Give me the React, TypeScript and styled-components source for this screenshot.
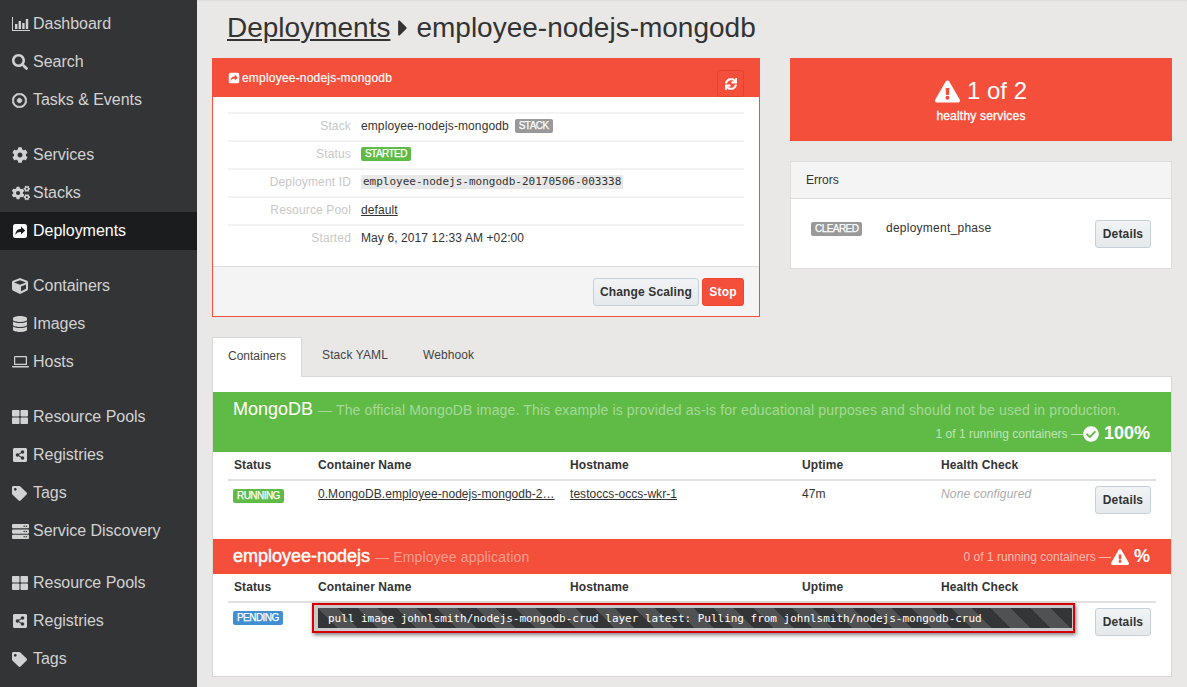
import React from "react";
import styled, { createGlobalStyle } from "styled-components";
import {
  FaCaretRight,
  FaCheckCircle,
  FaCog,
  FaCogs,
  FaCube,
  FaDatabase,
  FaExclamationTriangle,
  FaRegDotCircle,
  FaSearch,
  FaServer,
  FaShareAltSquare,
  FaSync,
  FaTag,
  FaThLarge,
} from "react-icons/fa";

const RED = "#f44f3a";
const GREEN = "#60bb46";
const SIDEBAR_WIDTH = 197;

const GlobalStyle = createGlobalStyle`
  html, body {
    margin: 0;
    padding: 0;
    height: 100%;
    overflow: hidden;
  }
  body {
    font-family: "Liberation Sans", Arial, sans-serif;
    font-size: 12px;
    color: #333;
  }
  * {
    box-sizing: border-box;
  }
`;

const Page = styled.div`
  display: flex;
  height: 687px;
  overflow: hidden;
  background: #e9e8e6;
`;

const Sidebar = styled.nav`
  width: ${SIDEBAR_WIDTH}px;
  flex: none;
  padding-top: 5px;
  background: #333436;
`;

const NavItem = styled.div<{ $active?: boolean; $gap?: number }>`
  display: flex;
  align-items: center;
  height: 38px;
  margin-top: ${(p) => p.$gap ?? 0}px;
  padding-left: 12px;
  font-size: 16px;
  letter-spacing: -0.03px;
  color: ${(p) => (p.$active ? "#fff" : "#d2d2d2")};
  background: ${(p) => (p.$active ? "#1b1c1e" : "transparent")};
`;

const NavIcon = styled.span`
  display: flex;
  align-items: center;
  width: 21px;
  flex: none;
`;

const Main = styled.main`
  flex: 1;
  min-width: 0;
  padding: 0 15px;
  box-shadow: inset 0 2px 2px -1px rgba(0, 0, 0, 0.06);
`;

const Title = styled.h1`
  display: flex;
  align-items: center;
  height: 58px;
  margin: 0;
  padding: 0 0 3px 15px;
  font-size: 28px;
  font-weight: 400;
  color: #333;
  a {
    color: inherit;
    text-decoration: underline;
  }
`;

const TopGrid = styled.div`
  display: grid;
  grid-template-columns: 548px 382px;
  column-gap: 30px;
`;

const DeploymentPanel = styled.section`
  height: 259px;
  display: flex;
  flex-direction: column;
  background: #fff;
  border: 1px solid ${RED};
`;

const PanelHead = styled.div`
  display: flex;
  align-items: center;
  justify-content: space-between;
  height: 38px;
  padding: 0 15px;
  color: #fff;
  background: ${RED};
  font-size: 12px;
`;

const PanelTitle = styled.span`
  display: flex;
  align-items: center;
  gap: 2px;
  letter-spacing: 0.2px;
  -webkit-text-stroke: 0.15px #fff;
`;

const RefreshButton = styled.button`
  display: flex;
  align-items: center;
  justify-content: center;
  width: 27px;
  height: 27px;
  margin-top: 11px;
  padding: 0;
  color: #fff;
  background: ${RED};
  border: 1px solid #e6422e;
  border-radius: 3px;
`;

const InfoBody = styled.div`
  flex: 1;
  padding: 15px 15px 0;
`;

const InfoRow = styled.div`
  display: grid;
  grid-template-columns: 123px 1fr;
  column-gap: 10px;
  align-items: center;
  height: 28px;
  padding-bottom: 2px;
  border-top: 2px solid #f3f3f3;
`;

const InfoLabel = styled.span`
  text-align: right;
  letter-spacing: 0.15px;
  color: #c8c8c8;
`;

const InfoValue = styled.span`
  display: flex;
  align-items: center;
  gap: 6px;
  letter-spacing: 0.1px;
  a {
    color: #333;
    text-decoration: underline;
  }
`;

const Code = styled.code`
  padding: 0 2px;
  font-family: "DejaVu Sans Mono", monospace;
  font-size: 11px;
  line-height: 14px;
  letter-spacing: 0;
  background: #e8e8e8;
`;

const Badge = styled.span<{ $color: string }>`
  display: inline-block;
  height: 14px;
  padding: 0 4px;
  font-size: 10px;
  line-height: 14px;
  letter-spacing: -0.55px;
  -webkit-text-stroke: 0.25px #fff;
  color: #fff;
  background: ${(p) => p.$color};
  border-radius: 2px;
`;

const PanelFoot = styled.div`
  display: flex;
  justify-content: flex-end;
  align-items: center;
  gap: 3px;
  height: 50px;
  padding: 0 15px;
  background: #f4f4f4;
  border-top: 1px solid #ddd;
`;

const Button = styled.button<{ $danger?: boolean }>`
  height: 28px;
  min-width: 42px;
  padding: 0 6px;
  font-family: inherit;
  font-size: 12px;
  font-weight: 700;
  letter-spacing: 0.15px;
  color: ${(p) => (p.$danger ? "#fff" : "#333")};
  background: ${(p) =>
    p.$danger ? RED : "linear-gradient(#f1f3f5, #e5e9ec)"};
  border: 1px solid ${(p) => (p.$danger ? "#ee4530" : "#c6d0d9")};
  border-radius: 3px;
`;

const DetailsButton = styled(Button)`
  width: 56px;
`;

const SideColumn = styled.div`
  display: flex;
  flex-direction: column;
  gap: 20px;
`;

const HealthBox = styled.div`
  display: flex;
  flex-direction: column;
  align-items: center;
  height: 83px;
  padding-top: 18px;
  color: #fff;
  background: ${RED};
`;

const HealthCount = styled.div`
  display: flex;
  align-items: center;
  gap: 7px;
  height: 30px;
  font-size: 24px;
`;

const HealthCaption = styled.div`
  margin-top: 3px;
  font-size: 12px;
  letter-spacing: 0.2px;
  -webkit-text-stroke: 0.3px #fff;
`;

const ErrorsPanel = styled.section`
  height: 108px;
  background: #fff;
  border: 1px solid #ddd;
`;

const ErrorsHead = styled.div`
  display: flex;
  align-items: center;
  height: 37px;
  padding-left: 15px;
  background: #f4f4f4;
  border-bottom: 1px solid #ddd;
`;

const ErrorRow = styled.div`
  display: grid;
  grid-template-columns: 75px 1fr auto;
  align-items: start;
  padding: 21px 20px 0;
`;

const ErrorBadge = styled.span`
  margin-top: 1px;
`;

const ErrorText = styled.span`
  margin-top: 1px;
  letter-spacing: 0.25px;
`;

const Tabs = styled.div`
  display: flex;
  height: 40px;
  margin-top: 20px;
  position: relative;
  z-index: 1;
`;

const Tab = styled.div<{ $active?: boolean }>`
  display: flex;
  align-items: center;
  height: ${(p) => (p.$active ? 40 : 39)}px;
  padding: 0 15px 3px ${(p) => (p.$active ? 15 : 20)}px;
  letter-spacing: ${(p) => (p.$active ? 0 : 0.1)}px;
  color: #444;
  background: ${(p) => (p.$active ? "#fff" : "transparent")};
  border: ${(p) => (p.$active ? "1px solid #d8d8d8" : "0")};
  border-bottom: 0;
`;

const TabContent = styled.div`
  height: 301px;
  margin-top: -1px;
  padding-top: 15px;
  background: #fff;
  border: 1px solid #d8d8d8;
`;

const ServiceHead = styled.div<{ $color: string; $tall?: boolean }>`
  display: flex;
  flex-direction: ${(p) => (p.$tall ? "column" : "row")};
  justify-content: ${(p) => (p.$tall ? "flex-start" : "space-between")};
  align-items: ${(p) => (p.$tall ? "stretch" : "center")};
  height: ${(p) => (p.$tall ? 60 : 35)}px;
  padding: ${(p) => (p.$tall ? "7px" : "0")} 21px 0 20px;
  color: #fff;
  background: ${(p) => p.$color};
`;

const ServiceLine = styled.div`
  display: flex;
  align-items: baseline;
  white-space: nowrap;
`;

const ServiceName = styled.span<{ $heavy?: boolean }>`
  font-size: 18px;
  -webkit-text-stroke: ${(p) => (p.$heavy ? "0.45px #fff" : "0")};
`;

const ServiceDesc = styled.span`
  margin-left: 5px;
  font-size: 14px;
  letter-spacing: 0.15px;
  color: rgba(255, 255, 255, 0.45);
`;

const ServiceStats = styled.div<{ $offset?: number }>`
  display: flex;
  align-items: center;
  justify-content: flex-end;
  margin-top: ${(p) => p.$offset ?? 0}px;
  font-size: 12px;
  color: rgba(255, 255, 255, 0.62);
  svg {
    color: #fff;
    margin: 0 5px 0 0;
  }
`;

const Percent = styled.span`
  font-size: 18px;
  font-weight: 700;
  color: #fff;
`;

const ContainerTable = styled.div`
  padding: 0 15px;
`;

const HeadRow = styled.div`
  display: grid;
  grid-template-columns: 84px 252px 232px 139px 1fr;
  align-items: center;
  height: 29px;
  padding-bottom: 2px;
  border-bottom: 2px solid #e0e0e0;
`;

const HeadCell = styled.span`
  padding-left: 6px;
  font-weight: 700;
  letter-spacing: 0.1px;
  color: #333;
`;

const BodyRow = styled.div`
  display: grid;
  grid-template-columns: 84px 252px 232px 139px 1fr auto;
  align-items: start;
  padding-top: 5px;
  height: 58px;
`;

const BodyCell = styled.span`
  padding: 1px 0 0 6px;
  letter-spacing: 0.05px;
  white-space: nowrap;
  a {
    color: #333;
    text-decoration: underline;
  }
`;

const BadgeCell = styled.span`
  padding: 2px 0 0 5px;
`;

const MutedCell = styled(BodyCell)`
  font-style: italic;
  color: #aaa;
  letter-spacing: 0.15px;
`;

const ActionCell = styled.span`
  display: flex;
  justify-content: flex-end;
  padding-right: 5px;
`;

const PendingRow = styled.div`
  display: grid;
  grid-template-columns: 84px 763px 1fr;
  align-items: start;
`;

const ProgressBox = styled.div`
  height: 30px;
  padding: 3px 1px 3px 4px;
  background: #c9c9c9;
  border: 2px solid #d80000;
  box-shadow: 1px 2px 4px rgba(0, 0, 0, 0.5);
`;

const ProgressBar = styled.div`
  height: 20px;
  padding: 1px 0 0 10px;
  font-family: "DejaVu Sans Mono", monospace;
  font-size: 11px;
  line-height: 19px;
  letter-spacing: -0.02px;
  color: #fff;
  white-space: nowrap;
  background: repeating-linear-gradient(
    45deg,
    #343536 0 14px,
    #505153 14px 28px
  );
`;

const PendingStatus = styled.span`
  padding: 7px 0 0 5px;
`;

const PendingAction = styled(ActionCell)`
  padding-top: 5px;
`;

// font awesome 4 share-square, the one in the packages has a different arrow
const ShareSquareIcon = ({ size = 16 }: { size?: number }) => (
  <svg width={size} height={size} viewBox="0 0 16 16" fill="currentColor">
    <path
      fillRule="evenodd"
      d="M3.5 1h9A2.5 2.5 0 0 1 15 3.5v9a2.5 2.5 0 0 1-2.5 2.5h-9A2.5 2.5 0 0 1 1 12.5v-9A2.5 2.5 0 0 1 3.5 1zM9 3.6v2.3C6 6 3.6 7.4 3.4 11.8 4.8 9.7 6.5 9 9 9.1v2.3l4.2-3.9z"
    />
  </svg>
);

const BarChartIcon = () => (
  <svg width="18" height="16" viewBox="0 0 18 16" fill="currentColor">
    <path d="M0 1h1v13h17v1H0z" />
    <path d="M3 8h2.4v5H3zM6.6 5h2.4v8H6.6zM10.2 7h2.4v6h-2.4zM13.8 3h2.4v10h-2.4z" />
  </svg>
);

const LaptopIcon = () => (
  <svg width="17" height="16" viewBox="0 0 17 16" fill="currentColor">
    <path
      fillRule="evenodd"
      d="M3 2h11a1 1 0 0 1 1 1v8H2V3a1 1 0 0 1 1-1zm.2 1.2v6.6h10.6V3.2z"
    />
    <path d="M0 12h17v.6a1 1 0 0 1-1 1H1a1 1 0 0 1-1-1z" />
  </svg>
);

interface NavEntry {
  label: string;
  icon: React.ReactNode;
  gap?: number;
  active?: boolean;
}

const NAV_ITEMS: NavEntry[] = [
  { label: "Dashboard", icon: <BarChartIcon /> },
  { label: "Search", icon: <FaSearch size={16} /> },
  {
    label: "Tasks & Events",
    icon: <FaRegDotCircle size={15} stroke="currentColor" strokeWidth={24} />,
  },
  { label: "Services", icon: <FaCog size={16} />, gap: 17 },
  { label: "Stacks", icon: <FaCogs size={18} /> },
  { label: "Deployments", icon: <ShareSquareIcon />, active: true },
  { label: "Containers", icon: <FaCube size={16} />, gap: 17 },
  { label: "Images", icon: <FaDatabase size={16} /> },
  { label: "Hosts", icon: <LaptopIcon /> },
  { label: "Resource Pools", icon: <FaThLarge size={16} />, gap: 17 },
  { label: "Registries", icon: <FaShareAltSquare size={16} /> },
  { label: "Tags", icon: <FaTag size={15} /> },
  { label: "Service Discovery", icon: <FaServer size={17} /> },
  { label: "Resource Pools", icon: <FaThLarge size={16} />, gap: 14 },
  { label: "Registries", icon: <FaShareAltSquare size={16} /> },
  { label: "Tags", icon: <FaTag size={15} /> },
];

const ContainerHeader = () => (
  <HeadRow>
    <HeadCell>Status</HeadCell>
    <HeadCell>Container Name</HeadCell>
    <HeadCell>Hostname</HeadCell>
    <HeadCell>Uptime</HeadCell>
    <HeadCell>Health Check</HeadCell>
  </HeadRow>
);

export default function App() {
  return (
    <>
      <GlobalStyle />
      <Page>
        <Sidebar>
          {NAV_ITEMS.map((item, i) => (
            <NavItem key={i} $active={item.active} $gap={item.gap}>
              <NavIcon>{item.icon}</NavIcon>
              {item.label}
            </NavItem>
          ))}
        </Sidebar>
        <Main>
          <Title>
            <a>Deployments</a>
            <FaCaretRight size={26} />
            employee-nodejs-mongodb
          </Title>
          <TopGrid>
            <DeploymentPanel>
              <PanelHead>
                <PanelTitle>
                  <ShareSquareIcon size={12} />
                  employee-nodejs-mongodb
                </PanelTitle>
                <RefreshButton>
                  <FaSync size={12} stroke="currentColor" strokeWidth={20} />
                </RefreshButton>
              </PanelHead>
              <InfoBody>
                <InfoRow>
                  <InfoLabel>Stack</InfoLabel>
                  <InfoValue>
                    employee-nodejs-mongodb <Badge $color="#999">STACK</Badge>
                  </InfoValue>
                </InfoRow>
                <InfoRow>
                  <InfoLabel>Status</InfoLabel>
                  <InfoValue>
                    <Badge $color={GREEN}>STARTED</Badge>
                  </InfoValue>
                </InfoRow>
                <InfoRow>
                  <InfoLabel>Deployment ID</InfoLabel>
                  <InfoValue>
                    <Code>employee-nodejs-mongodb-20170506-003338</Code>
                  </InfoValue>
                </InfoRow>
                <InfoRow>
                  <InfoLabel>Resource Pool</InfoLabel>
                  <InfoValue>
                    <a>default</a>
                  </InfoValue>
                </InfoRow>
                <InfoRow>
                  <InfoLabel>Started</InfoLabel>
                  <InfoValue>May 6, 2017 12:33 AM +02:00</InfoValue>
                </InfoRow>
              </InfoBody>
              <PanelFoot>
                <Button>Change Scaling</Button>
                <Button $danger>Stop</Button>
              </PanelFoot>
            </DeploymentPanel>
            <SideColumn>
              <HealthBox>
                <HealthCount>
                  <FaExclamationTriangle size={25} />1 of 2
                </HealthCount>
                <HealthCaption>healthy services</HealthCaption>
              </HealthBox>
              <ErrorsPanel>
                <ErrorsHead>Errors</ErrorsHead>
                <ErrorRow>
                  <ErrorBadge>
                    <Badge $color="#999">CLEARED</Badge>
                  </ErrorBadge>
                  <ErrorText>deployment_phase</ErrorText>
                  <DetailsButton>Details</DetailsButton>
                </ErrorRow>
              </ErrorsPanel>
            </SideColumn>
          </TopGrid>
          <Tabs>
            <Tab $active>Containers</Tab>
            <Tab>Stack YAML</Tab>
            <Tab>Webhook</Tab>
          </Tabs>
          <TabContent>
            <ServiceHead $color={GREEN} $tall>
              <ServiceLine>
                <ServiceName>MongoDB</ServiceName>
                <ServiceDesc>
                  — The official MongoDB image. This example is provided as-is
                  for educational purposes and should not be used in production.
                </ServiceDesc>
              </ServiceLine>
              <ServiceStats $offset={3}>
                1 of 1 running containers —
                <FaCheckCircle size={16} />
                <Percent>100%</Percent>
              </ServiceStats>
            </ServiceHead>
            <ContainerTable>
              <ContainerHeader />
              <BodyRow>
                <BadgeCell>
                  <Badge $color={GREEN}>RUNNING</Badge>
                </BadgeCell>
                <BodyCell>
                  <a>0.MongoDB.employee-nodejs-mongodb-2…</a>
                </BodyCell>
                <BodyCell>
                  <a>testoccs-occs-wkr-1</a>
                </BodyCell>
                <BodyCell>47m</BodyCell>
                <MutedCell>None configured</MutedCell>
                <ActionCell>
                  <DetailsButton>Details</DetailsButton>
                </ActionCell>
              </BodyRow>
            </ContainerTable>
            <ServiceHead $color={RED}>
              <ServiceLine>
                <ServiceName $heavy>employee-nodejs</ServiceName>
                <ServiceDesc>— Employee application</ServiceDesc>
              </ServiceLine>
              <ServiceStats>
                0 of 1 running containers —
                <FaExclamationTriangle size={18} />
                <Percent>%</Percent>
              </ServiceStats>
            </ServiceHead>
            <ContainerTable>
              <ContainerHeader />
              <PendingRow>
                <PendingStatus>
                  <Badge $color="#3f8fd2">PENDING</Badge>
                </PendingStatus>
                <ProgressBox>
                  <ProgressBar>
                    pull image johnlsmith/nodejs-mongodb-crud layer latest:
                    Pulling from johnlsmith/nodejs-mongodb-crud
                  </ProgressBar>
                </ProgressBox>
                <PendingAction>
                  <DetailsButton>Details</DetailsButton>
                </PendingAction>
              </PendingRow>
            </ContainerTable>
          </TabContent>
        </Main>
      </Page>
    </>
  );
}
